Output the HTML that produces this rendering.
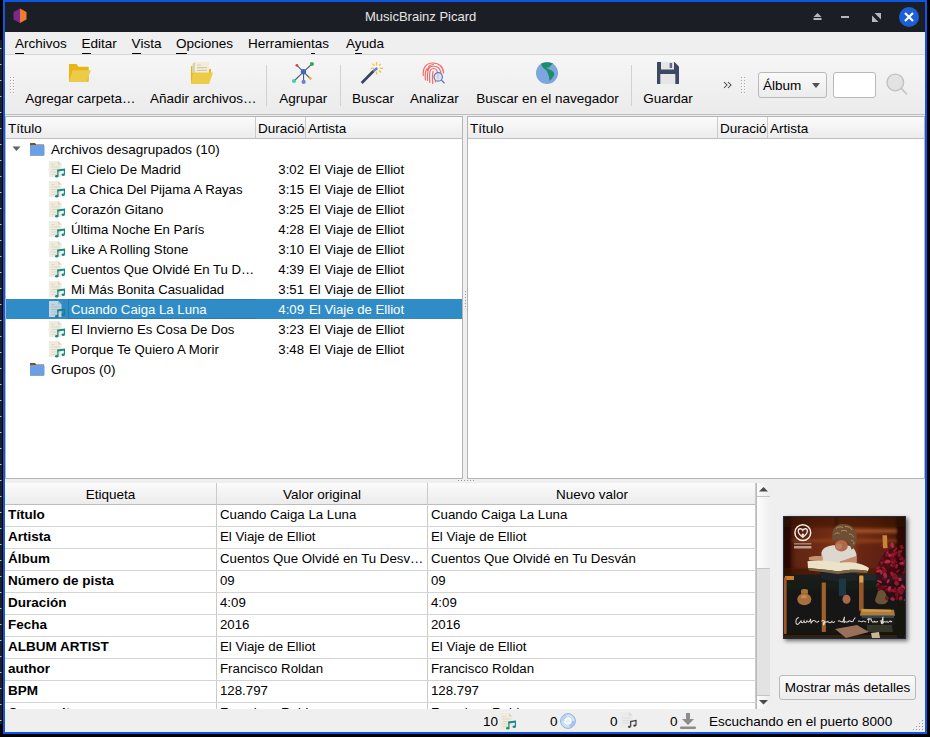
<!DOCTYPE html><html><head><meta charset="utf-8"><style>
*{margin:0;padding:0;box-sizing:border-box}
html,body{width:930px;height:737px;overflow:hidden;background:#000}
body{position:relative;font-family:"Liberation Sans",sans-serif;font-size:13.5px;color:#000}
.a{position:absolute}
.t{position:absolute;white-space:nowrap}
svg{position:absolute;overflow:visible}
</style></head><body>
<div class="a" style="left:0;top:40px;width:2px;height:684px;background:#1c1f26"></div>
<div class="a" style="left:0;top:48px;width:1px;height:1px;background:#c8e04a"></div><div class="a" style="left:1px;top:48px;width:1px;height:1px;background:#2a6be0"></div>
<div class="a" style="left:0;top:64px;width:1px;height:1px;background:#c8e04a"></div><div class="a" style="left:1px;top:64px;width:1px;height:1px;background:#2a6be0"></div>
<div class="a" style="left:0;top:80px;width:1px;height:1px;background:#c8e04a"></div><div class="a" style="left:1px;top:80px;width:1px;height:1px;background:#2a6be0"></div>
<div class="a" style="left:0;top:96px;width:1px;height:1px;background:#c8e04a"></div><div class="a" style="left:1px;top:96px;width:1px;height:1px;background:#2a6be0"></div>
<div class="a" style="left:0;top:112px;width:1px;height:1px;background:#c8e04a"></div><div class="a" style="left:1px;top:112px;width:1px;height:1px;background:#2a6be0"></div>
<div class="a" style="left:0;top:128px;width:1px;height:1px;background:#c8e04a"></div><div class="a" style="left:1px;top:128px;width:1px;height:1px;background:#2a6be0"></div>
<div class="a" style="left:0;top:144px;width:1px;height:1px;background:#c8e04a"></div><div class="a" style="left:1px;top:144px;width:1px;height:1px;background:#2a6be0"></div>
<div class="a" style="left:0;top:160px;width:1px;height:1px;background:#c8e04a"></div><div class="a" style="left:1px;top:160px;width:1px;height:1px;background:#2a6be0"></div>
<div class="a" style="left:0;top:176px;width:1px;height:1px;background:#c8e04a"></div><div class="a" style="left:1px;top:176px;width:1px;height:1px;background:#2a6be0"></div>
<div class="a" style="left:0;top:192px;width:1px;height:1px;background:#c8e04a"></div><div class="a" style="left:1px;top:192px;width:1px;height:1px;background:#2a6be0"></div>
<div class="a" style="left:0;top:208px;width:1px;height:1px;background:#c8e04a"></div><div class="a" style="left:1px;top:208px;width:1px;height:1px;background:#2a6be0"></div>
<div class="a" style="left:0;top:224px;width:1px;height:1px;background:#c8e04a"></div><div class="a" style="left:1px;top:224px;width:1px;height:1px;background:#2a6be0"></div>
<div class="a" style="left:0;top:240px;width:1px;height:1px;background:#c8e04a"></div><div class="a" style="left:1px;top:240px;width:1px;height:1px;background:#2a6be0"></div>
<div class="a" style="left:0;top:256px;width:1px;height:1px;background:#c8e04a"></div><div class="a" style="left:1px;top:256px;width:1px;height:1px;background:#2a6be0"></div>
<div class="a" style="left:0;top:272px;width:1px;height:1px;background:#c8e04a"></div><div class="a" style="left:1px;top:272px;width:1px;height:1px;background:#2a6be0"></div>
<div class="a" style="left:0;top:288px;width:1px;height:1px;background:#c8e04a"></div><div class="a" style="left:1px;top:288px;width:1px;height:1px;background:#2a6be0"></div>
<div class="a" style="left:0;top:304px;width:1px;height:1px;background:#c8e04a"></div><div class="a" style="left:1px;top:304px;width:1px;height:1px;background:#2a6be0"></div>
<div class="a" style="left:0;top:320px;width:1px;height:1px;background:#c8e04a"></div><div class="a" style="left:1px;top:320px;width:1px;height:1px;background:#2a6be0"></div>
<div class="a" style="left:0;top:336px;width:1px;height:1px;background:#c8e04a"></div><div class="a" style="left:1px;top:336px;width:1px;height:1px;background:#2a6be0"></div>
<div class="a" style="left:0;top:352px;width:1px;height:1px;background:#c8e04a"></div><div class="a" style="left:1px;top:352px;width:1px;height:1px;background:#2a6be0"></div>
<div class="a" style="left:0;top:368px;width:1px;height:1px;background:#c8e04a"></div><div class="a" style="left:1px;top:368px;width:1px;height:1px;background:#2a6be0"></div>
<div class="a" style="left:0;top:384px;width:1px;height:1px;background:#c8e04a"></div><div class="a" style="left:1px;top:384px;width:1px;height:1px;background:#2a6be0"></div>
<div class="a" style="left:0;top:400px;width:1px;height:1px;background:#c8e04a"></div><div class="a" style="left:1px;top:400px;width:1px;height:1px;background:#2a6be0"></div>
<div class="a" style="left:0;top:416px;width:1px;height:1px;background:#c8e04a"></div><div class="a" style="left:1px;top:416px;width:1px;height:1px;background:#2a6be0"></div>
<div class="a" style="left:0;top:432px;width:1px;height:1px;background:#c8e04a"></div><div class="a" style="left:1px;top:432px;width:1px;height:1px;background:#2a6be0"></div>
<div class="a" style="left:0;top:448px;width:1px;height:1px;background:#c8e04a"></div><div class="a" style="left:1px;top:448px;width:1px;height:1px;background:#2a6be0"></div>
<div class="a" style="left:0;top:464px;width:1px;height:1px;background:#c8e04a"></div><div class="a" style="left:1px;top:464px;width:1px;height:1px;background:#2a6be0"></div>
<div class="a" style="left:0;top:480px;width:1px;height:1px;background:#c8e04a"></div><div class="a" style="left:1px;top:480px;width:1px;height:1px;background:#2a6be0"></div>
<div class="a" style="left:0;top:496px;width:1px;height:1px;background:#c8e04a"></div><div class="a" style="left:1px;top:496px;width:1px;height:1px;background:#2a6be0"></div>
<div class="a" style="left:0;top:512px;width:1px;height:1px;background:#c8e04a"></div><div class="a" style="left:1px;top:512px;width:1px;height:1px;background:#2a6be0"></div>
<div class="a" style="left:0;top:528px;width:1px;height:1px;background:#c8e04a"></div><div class="a" style="left:1px;top:528px;width:1px;height:1px;background:#2a6be0"></div>
<div class="a" style="left:0;top:544px;width:1px;height:1px;background:#c8e04a"></div><div class="a" style="left:1px;top:544px;width:1px;height:1px;background:#2a6be0"></div>
<div class="a" style="left:0;top:560px;width:1px;height:1px;background:#c8e04a"></div><div class="a" style="left:1px;top:560px;width:1px;height:1px;background:#2a6be0"></div>
<div class="a" style="left:0;top:576px;width:1px;height:1px;background:#c8e04a"></div><div class="a" style="left:1px;top:576px;width:1px;height:1px;background:#2a6be0"></div>
<div class="a" style="left:0;top:592px;width:1px;height:1px;background:#c8e04a"></div><div class="a" style="left:1px;top:592px;width:1px;height:1px;background:#2a6be0"></div>
<div class="a" style="left:0;top:608px;width:1px;height:1px;background:#c8e04a"></div><div class="a" style="left:1px;top:608px;width:1px;height:1px;background:#2a6be0"></div>
<div class="a" style="left:0;top:624px;width:1px;height:1px;background:#c8e04a"></div><div class="a" style="left:1px;top:624px;width:1px;height:1px;background:#2a6be0"></div>
<div class="a" style="left:0;top:640px;width:1px;height:1px;background:#c8e04a"></div><div class="a" style="left:1px;top:640px;width:1px;height:1px;background:#2a6be0"></div>
<div class="a" style="left:0;top:656px;width:1px;height:1px;background:#c8e04a"></div><div class="a" style="left:1px;top:656px;width:1px;height:1px;background:#2a6be0"></div>
<div class="a" style="left:0;top:672px;width:1px;height:1px;background:#c8e04a"></div><div class="a" style="left:1px;top:672px;width:1px;height:1px;background:#2a6be0"></div>
<div class="a" style="left:0;top:688px;width:1px;height:1px;background:#c8e04a"></div><div class="a" style="left:1px;top:688px;width:1px;height:1px;background:#2a6be0"></div>
<div class="a" style="left:0;top:704px;width:1px;height:1px;background:#c8e04a"></div><div class="a" style="left:1px;top:704px;width:1px;height:1px;background:#2a6be0"></div>
<div class="a" style="left:0;top:720px;width:1px;height:1px;background:#c8e04a"></div><div class="a" style="left:1px;top:720px;width:1px;height:1px;background:#2a6be0"></div>
<div class="a" style="left:3px;top:0;width:924px;height:734px;border:2px solid #0e57e4;background:#efefef"></div>
<div class="a" style="left:5px;top:2px;width:920px;height:30px;background:#1c1e25"></div>
<svg style="left:12px;top:8px" width="16" height="16" viewBox="0 0 16 16"><polygon points="8,0.5 14.5,4 14.5,11.5 8,15 8,0.5" fill="#f07b2e"/><polygon points="8,0.5 1.5,4 1.5,11.5 8,15" fill="#7a2a8c"/></svg>
<div class="t" style="left:365px;top:9px;line-height:16px;font-size:13px;color:#e6e6e6">MusicBrainz Picard</div>
<svg style="left:813px;top:12px" width="10" height="10"><polygon points="0.5,5 4.5,1 8.5,5" fill="#b4b8c4"/><rect x="0.5" y="6" width="8" height="2" fill="#b4b8c4"/></svg>
<div class="a" style="left:841px;top:16px;width:8px;height:2px;background:#b4b8c4"></div>
<svg style="left:872px;top:13px" width="10" height="9"><polygon points="2.5,0 9,0 9,6.5" fill="#b4b8c4"/><polygon points="0,2.5 0,9 6.5,9" fill="#b4b8c4"/></svg>
<svg style="left:898px;top:6px" width="22" height="22"><circle cx="11" cy="11" r="10" fill="#1d5fd8"/><path d="M7,7 L15,15 M15,7 L7,15" stroke="#fff" stroke-width="2.2"/></svg>
<div class="a" style="left:5px;top:32px;width:920px;height:22px;background:#efefef"></div>
<div class="a" style="left:5px;top:54px;width:920px;height:1px;background:#d6d6d6"></div>
<div class="t" style="left:15px;top:33px;line-height:22px"><span style="position:relative">A<i style="position:absolute;left:0;right:0;top:17px;height:1px;background:#000"></i></span>rchivos</div>
<div class="t" style="left:81.5px;top:33px;line-height:22px"><span style="position:relative">E<i style="position:absolute;left:0;right:0;top:17px;height:1px;background:#000"></i></span>ditar</div>
<div class="t" style="left:131.5px;top:33px;line-height:22px"><span style="position:relative">V<i style="position:absolute;left:0;right:0;top:17px;height:1px;background:#000"></i></span>ista</div>
<div class="t" style="left:176px;top:33px;line-height:22px"><span style="position:relative">O<i style="position:absolute;left:0;right:0;top:17px;height:1px;background:#000"></i></span>pciones</div>
<div class="t" style="left:248px;top:33px;line-height:22px">Herramien<span style="position:relative">t<i style="position:absolute;left:0;right:0;top:17px;height:1px;background:#000"></i></span>as</div>
<div class="t" style="left:346px;top:33px;line-height:22px">A<span style="position:relative">y<i style="position:absolute;left:0;right:0;top:17px;height:1px;background:#000"></i></span>uda</div>
<div class="a" style="left:5px;top:55px;width:920px;height:59px;background:linear-gradient(#f6f6f6,#ebebeb)"></div>
<div class="a" style="left:5px;top:114px;width:920px;height:1px;background:#bdbdbd"></div>
<div class="a" style="left:10px;top:77px;width:1px;height:1px;background:#a9a9a9;box-shadow:1px 1px 0 #fff"></div>
<div class="a" style="left:13px;top:77px;width:1px;height:1px;background:#a9a9a9;box-shadow:1px 1px 0 #fff"></div>
<div class="a" style="left:10px;top:80px;width:1px;height:1px;background:#a9a9a9;box-shadow:1px 1px 0 #fff"></div>
<div class="a" style="left:13px;top:80px;width:1px;height:1px;background:#a9a9a9;box-shadow:1px 1px 0 #fff"></div>
<div class="a" style="left:10px;top:83px;width:1px;height:1px;background:#a9a9a9;box-shadow:1px 1px 0 #fff"></div>
<div class="a" style="left:13px;top:83px;width:1px;height:1px;background:#a9a9a9;box-shadow:1px 1px 0 #fff"></div>
<div class="a" style="left:10px;top:86px;width:1px;height:1px;background:#a9a9a9;box-shadow:1px 1px 0 #fff"></div>
<div class="a" style="left:13px;top:86px;width:1px;height:1px;background:#a9a9a9;box-shadow:1px 1px 0 #fff"></div>
<div class="a" style="left:10px;top:89px;width:1px;height:1px;background:#a9a9a9;box-shadow:1px 1px 0 #fff"></div>
<div class="a" style="left:13px;top:89px;width:1px;height:1px;background:#a9a9a9;box-shadow:1px 1px 0 #fff"></div>
<div class="a" style="left:10px;top:92px;width:1px;height:1px;background:#a9a9a9;box-shadow:1px 1px 0 #fff"></div>
<div class="a" style="left:13px;top:92px;width:1px;height:1px;background:#a9a9a9;box-shadow:1px 1px 0 #fff"></div>
<div class="a" style="left:741px;top:77px;width:1px;height:1px;background:#a9a9a9;box-shadow:1px 1px 0 #fff"></div>
<div class="a" style="left:744px;top:77px;width:1px;height:1px;background:#a9a9a9;box-shadow:1px 1px 0 #fff"></div>
<div class="a" style="left:741px;top:80px;width:1px;height:1px;background:#a9a9a9;box-shadow:1px 1px 0 #fff"></div>
<div class="a" style="left:744px;top:80px;width:1px;height:1px;background:#a9a9a9;box-shadow:1px 1px 0 #fff"></div>
<div class="a" style="left:741px;top:83px;width:1px;height:1px;background:#a9a9a9;box-shadow:1px 1px 0 #fff"></div>
<div class="a" style="left:744px;top:83px;width:1px;height:1px;background:#a9a9a9;box-shadow:1px 1px 0 #fff"></div>
<div class="a" style="left:741px;top:86px;width:1px;height:1px;background:#a9a9a9;box-shadow:1px 1px 0 #fff"></div>
<div class="a" style="left:744px;top:86px;width:1px;height:1px;background:#a9a9a9;box-shadow:1px 1px 0 #fff"></div>
<div class="a" style="left:741px;top:89px;width:1px;height:1px;background:#a9a9a9;box-shadow:1px 1px 0 #fff"></div>
<div class="a" style="left:744px;top:89px;width:1px;height:1px;background:#a9a9a9;box-shadow:1px 1px 0 #fff"></div>
<div class="a" style="left:741px;top:92px;width:1px;height:1px;background:#a9a9a9;box-shadow:1px 1px 0 #fff"></div>
<div class="a" style="left:744px;top:92px;width:1px;height:1px;background:#a9a9a9;box-shadow:1px 1px 0 #fff"></div>
<div class="t" style="left:25.2px;top:91px;line-height:16px;width:108.8px;text-align:center">Agregar carpeta…</div>
<div class="t" style="left:150px;top:91px;line-height:16px;width:104.3px;text-align:center">Añadir archivos…</div>
<div class="t" style="left:278.3px;top:91px;line-height:16px;width:49.7px;text-align:center">Agrupar</div>
<div class="t" style="left:352px;top:91px;line-height:16px;width:40.7px;text-align:center">Buscar</div>
<div class="t" style="left:409.8px;top:91px;line-height:16px;width:49px;text-align:center">Analizar</div>
<div class="t" style="left:476.1px;top:91px;line-height:16px;width:142.7px;text-align:center">Buscar en el navegador</div>
<div class="t" style="left:643.3px;top:91px;line-height:16px;width:49.4px;text-align:center">Guardar</div>
<div class="a" style="left:266px;top:65px;width:1px;height:41px;background:#d2d2d2"></div>
<div class="a" style="left:340px;top:65px;width:1px;height:41px;background:#d2d2d2"></div>
<div class="a" style="left:631px;top:65px;width:1px;height:41px;background:#d2d2d2"></div>
<svg style="left:69px;top:64px" width="22" height="18" viewBox="0 0 22 18"><path d="M0,0 H7.7 L9.4,2.7 H19.7 V17.8 H0 Z" fill="#e8b418"/><polygon points="3.6,6.2 21.8,6.2 17.7,17.8 0,17.8" fill="#eccb47"/></svg>
<svg style="left:191px;top:62px" width="22" height="22" viewBox="0 0 22 22"><rect x="0" y="4" width="2.5" height="18" fill="#e8b418"/><rect x="18" y="7" width="2" height="4" fill="#e8b418"/><polygon points="1.5,1.5 4,0 18,0 18,11 1.5,11" fill="#f3edd8"/><polygon points="1.5,1.5 4,0 4,11 1.5,11" fill="#d8d2bc"/><rect x="6" y="2.4" width="4" height="1.2" fill="#dcd6c0"/><rect x="6" y="5" width="10" height="1.2" fill="#cfc8b0"/><rect x="6" y="7.8" width="10" height="1.2" fill="#cfc8b0"/><polygon points="2,10.5 22,10.5 18,22 0,22" fill="#eccb47"/></svg>
<svg style="left:288px;top:58px" width="30" height="30" viewBox="0 0 30 30"><g stroke="#4f5a73" stroke-width="1.1"><line x1="15.5" y1="13.8" x2="8.9" y2="7.3"/><line x1="15.5" y1="13.8" x2="23.9" y2="6"/><line x1="15.5" y1="13.8" x2="6" y2="23"/><line x1="15.5" y1="13.8" x2="15.6" y2="23.9"/><line x1="15.5" y1="13.8" x2="22.3" y2="20.5"/></g><circle cx="15.5" cy="13.8" r="2.7" fill="#4467b0"/><circle cx="8.9" cy="7.3" r="1.4" fill="#da4a3a"/><circle cx="23.9" cy="6" r="2.1" fill="#36a852"/><circle cx="6" cy="23" r="2.1" fill="#44d39a"/><circle cx="15.6" cy="23.9" r="2.1" fill="#6f82cc"/><circle cx="22.3" cy="20.5" r="1.4" fill="#f2b81a"/></svg>
<svg style="left:356px;top:58px" width="30" height="30" viewBox="0 0 30 30"><line x1="5.7" y1="25" x2="17.5" y2="13" stroke="#39425f" stroke-width="2.6"/><line x1="17.3" y1="13.2" x2="21.3" y2="10" stroke="#6b80cc" stroke-width="2.6"/><g stroke="#f1c232" stroke-width="1.3"><line x1="20.5" y1="4" x2="20.5" y2="7.5"/><line x1="20.5" y1="13.5" x2="20.5" y2="16.5"/><line x1="14.8" y1="10.3" x2="18" y2="10.3"/><line x1="23.8" y1="10.3" x2="27" y2="10.3"/><line x1="16.4" y1="5.6" x2="18.5" y2="7.6"/><line x1="24.8" y1="6" x2="23" y2="7.5"/><line x1="23" y1="12.5" x2="25" y2="14.5"/></g></svg>
<svg style="left:418px;top:58px" width="30" height="30" viewBox="0 0 30 30"><g fill="none" stroke="#f26b6b" stroke-width="1.2" stroke-linecap="round"><path d="M5.3,17.5 C4.5,10 8,5 15,5 C21,5 25.5,9 25.5,15"/><path d="M9.3,12.5 C10,8.5 12,6.5 15.5,6.5"/><path d="M7.5,22 C7,18 7,14 8.5,11"/><path d="M9.5,22.5 C9.5,18 9,12 11.5,9.5 C13.5,7.8 17.5,7.8 20,9.5 C22.5,11.5 23,14 23,17"/><path d="M11.8,24.5 C11.5,19 11,15 12.5,12 C14,10 17,10 18.5,12 C19.8,14 20,16 20.5,18"/><path d="M14.7,25.5 C14.5,21 14,17 15,13.5"/><path d="M17.4,20 L17.5,24"/></g><circle cx="20.2" cy="18.9" r="4.2" fill="#dbe6f3" stroke="#5e78c0" stroke-width="1.2"/><line x1="23.2" y1="21.9" x2="26.5" y2="25.3" stroke="#5e78c0" stroke-width="1.3"/><line x1="20" y1="16" x2="20" y2="21" stroke="#f0a0a0" stroke-width="0.8"/></svg>
<svg style="left:536px;top:62px" width="22" height="22" viewBox="0 0 22 22"><circle cx="11" cy="11" r="11" fill="#7da7dc"/><path d="M5,1.7 C8,0 14,0 17.3,1.6 C15,3 14,4.5 12.8,6 C12,5.5 11.5,5 10.5,5.5 C11.5,6.5 13,7.5 14.5,8 C17,9 18.2,10 18.2,12 C18,14.5 16,16.5 13.5,19 C13,17 13.2,15 12.5,13 C11.5,11 11,9 10,8 C8,7 6,5 5,1.7 Z" fill="#1d8c6b"/></svg>
<svg style="left:657px;top:62px" width="22" height="22" viewBox="0 0 22 22"><path d="M0,0 H17.5 L22,4.5 V22 H0 Z" fill="#3d4963"/><rect x="4" y="0" width="13" height="7.5" fill="#e6e6e6"/><rect x="12.7" y="1.2" width="2.4" height="4.6" fill="#3d4963"/><rect x="13.4" y="2" width="1" height="3" fill="#8a93a8"/><rect x="3.3" y="12" width="15" height="10" fill="#e6e6e6"/></svg>
<svg style="left:723px;top:81px" width="10" height="8" viewBox="0 0 10 8"><path d="M1,1 L4,4 L1,7 M5,1 L8,4 L5,7" fill="none" stroke="#444" stroke-width="1.05"/></svg>
<div class="a" style="left:758px;top:72px;width:69px;height:26px;border:1px solid #b9b9b9;border-radius:3px;background:linear-gradient(#fafafa,#ececec)"></div>
<div class="t" style="left:763px;top:78px;line-height:16px">Álbum</div>
<svg style="left:812px;top:83px" width="8" height="5"><polygon points="0,0 8,0 4,5" fill="#505050"/></svg>
<div class="a" style="left:833px;top:72px;width:43px;height:26px;border:1px solid #b9b9b9;border-radius:3px;background:#fff"></div>
<svg style="left:884px;top:71px" width="26" height="26" viewBox="0 0 26 26"><circle cx="11.3" cy="11.4" r="8.3" fill="#e3e3e3" stroke="#c2c2c2" stroke-width="1.4"/><line x1="17.2" y1="17.3" x2="23" y2="23.5" stroke="#c2c2c2" stroke-width="1.6"/></svg>
<div class="a" style="left:5px;top:115px;width:920px;height:594px;background:#efefef"></div>
<div class="a" style="left:5px;top:116px;width:458px;height:363px;border:1px solid #b4b4b4;background:#fff"></div>
<div class="a" style="left:6px;top:117px;width:456px;height:21px;background:linear-gradient(#fbfbfb,#ececec)"></div>
<div class="a" style="left:6px;top:138px;width:456px;height:1px;background:#bdbdbd"></div>
<div class="a" style="left:255px;top:117px;width:1px;height:21px;background:#cbcbcb"></div>
<div class="a" style="left:305px;top:117px;width:1px;height:21px;background:#cbcbcb"></div>
<div class="t" style="left:8px;top:119px;line-height:20px">Título</div>
<div class="t" style="left:258px;top:119px;line-height:20px;width:47px;overflow:hidden">Duración</div>
<div class="t" style="left:308px;top:119px;line-height:20px">Artista</div>
<div class="a" style="left:467px;top:116px;width:458px;height:363px;border:1px solid #b4b4b4;background:#fff"></div>
<div class="a" style="left:468px;top:117px;width:456px;height:21px;background:linear-gradient(#fbfbfb,#ececec)"></div>
<div class="a" style="left:468px;top:138px;width:456px;height:1px;background:#bdbdbd"></div>
<div class="a" style="left:717px;top:117px;width:1px;height:21px;background:#cbcbcb"></div>
<div class="a" style="left:767px;top:117px;width:1px;height:21px;background:#cbcbcb"></div>
<div class="t" style="left:470px;top:119px;line-height:20px">Título</div>
<div class="t" style="left:720px;top:119px;line-height:20px;width:47px;overflow:hidden">Duración</div>
<div class="t" style="left:770px;top:119px;line-height:20px">Artista</div>
<div class="a" style="left:465px;top:291px;width:1px;height:1px;background:#9a9a9a"></div>
<div class="a" style="left:465px;top:294px;width:1px;height:1px;background:#9a9a9a"></div>
<div class="a" style="left:465px;top:297px;width:1px;height:1px;background:#9a9a9a"></div>
<div class="a" style="left:465px;top:300px;width:1px;height:1px;background:#9a9a9a"></div>
<div class="a" style="left:465px;top:303px;width:1px;height:1px;background:#9a9a9a"></div>
<div class="a" style="left:465px;top:306px;width:1px;height:1px;background:#9a9a9a"></div>
<div class="a" style="left:458px;top:480px;width:1px;height:1px;background:#9a9a9a"></div>
<div class="a" style="left:461px;top:480px;width:1px;height:1px;background:#9a9a9a"></div>
<div class="a" style="left:464px;top:480px;width:1px;height:1px;background:#9a9a9a"></div>
<div class="a" style="left:467px;top:480px;width:1px;height:1px;background:#9a9a9a"></div>
<div class="a" style="left:470px;top:480px;width:1px;height:1px;background:#9a9a9a"></div>
<div class="a" style="left:473px;top:480px;width:1px;height:1px;background:#9a9a9a"></div>
<svg style="left:12px;top:146px" width="9" height="6"><polygon points="0.5,0.5 8.5,0.5 4.5,5" fill="#606060"/></svg>
<svg style="left:30px;top:143px" width="15" height="13" viewBox="0 0 15 13"><path d="M0,0.5 Q0,0 0.5,0 H5 L6.2,1.5 H14 V12.5 H0 Z" fill="#8a4b14"/><rect x="0" y="2" width="14.5" height="10.5" rx="0.8" fill="#6aa0e6"/></svg>
<div class="t" style="left:51px;top:140px;line-height:20px">Archivos desagrupados (10)</div>
<svg style="left:49px;top:161px" width="17" height="17" viewBox="0 0 17 17"><path d="M0,0 H9 L12.5,3.5 V16 H0 Z" fill="#efebdd"/><path d="M9,0 L12.5,3.5 H9 Z" fill="#d9d3c0"/><g fill="#dcd6c4"><rect x="2.5" y="3" width="3" height="0.9"/><rect x="2.5" y="5.5" width="8" height="0.9"/><rect x="2.5" y="8" width="8" height="0.9"/><rect x="2.5" y="10.5" width="8" height="0.9"/><rect x="2.5" y="13" width="6" height="0.9"/></g><polygon points="8.3,8.4 16,7.6 16,9.6 8.3,10.4" fill="#168a8a"/><rect x="8.3" y="9" width="1.2" height="6" fill="#168a8a"/><rect x="14.8" y="8" width="1.2" height="5.6" fill="#168a8a"/><ellipse cx="7.7" cy="15.2" rx="1.7" ry="1.3" fill="#168a8a"/><ellipse cx="14.2" cy="13.8" rx="1.7" ry="1.3" fill="#168a8a"/></svg>
<div class="t" style="left:71px;top:160px;line-height:20px;font-size:13.2px;color:#000">El Cielo De Madrid</div>
<div class="t" style="left:255px;top:160px;line-height:20px;width:49px;text-align:right;font-size:13.2px;color:#000">3:02</div>
<div class="t" style="left:309px;top:160px;line-height:20px;font-size:13.2px;color:#000">El Viaje de Elliot</div>
<svg style="left:49px;top:181px" width="17" height="17" viewBox="0 0 17 17"><path d="M0,0 H9 L12.5,3.5 V16 H0 Z" fill="#efebdd"/><path d="M9,0 L12.5,3.5 H9 Z" fill="#d9d3c0"/><g fill="#dcd6c4"><rect x="2.5" y="3" width="3" height="0.9"/><rect x="2.5" y="5.5" width="8" height="0.9"/><rect x="2.5" y="8" width="8" height="0.9"/><rect x="2.5" y="10.5" width="8" height="0.9"/><rect x="2.5" y="13" width="6" height="0.9"/></g><polygon points="8.3,8.4 16,7.6 16,9.6 8.3,10.4" fill="#168a8a"/><rect x="8.3" y="9" width="1.2" height="6" fill="#168a8a"/><rect x="14.8" y="8" width="1.2" height="5.6" fill="#168a8a"/><ellipse cx="7.7" cy="15.2" rx="1.7" ry="1.3" fill="#168a8a"/><ellipse cx="14.2" cy="13.8" rx="1.7" ry="1.3" fill="#168a8a"/></svg>
<div class="t" style="left:71px;top:180px;line-height:20px;font-size:13.2px;color:#000">La Chica Del Pijama A Rayas</div>
<div class="t" style="left:255px;top:180px;line-height:20px;width:49px;text-align:right;font-size:13.2px;color:#000">3:15</div>
<div class="t" style="left:309px;top:180px;line-height:20px;font-size:13.2px;color:#000">El Viaje de Elliot</div>
<svg style="left:49px;top:201px" width="17" height="17" viewBox="0 0 17 17"><path d="M0,0 H9 L12.5,3.5 V16 H0 Z" fill="#efebdd"/><path d="M9,0 L12.5,3.5 H9 Z" fill="#d9d3c0"/><g fill="#dcd6c4"><rect x="2.5" y="3" width="3" height="0.9"/><rect x="2.5" y="5.5" width="8" height="0.9"/><rect x="2.5" y="8" width="8" height="0.9"/><rect x="2.5" y="10.5" width="8" height="0.9"/><rect x="2.5" y="13" width="6" height="0.9"/></g><polygon points="8.3,8.4 16,7.6 16,9.6 8.3,10.4" fill="#168a8a"/><rect x="8.3" y="9" width="1.2" height="6" fill="#168a8a"/><rect x="14.8" y="8" width="1.2" height="5.6" fill="#168a8a"/><ellipse cx="7.7" cy="15.2" rx="1.7" ry="1.3" fill="#168a8a"/><ellipse cx="14.2" cy="13.8" rx="1.7" ry="1.3" fill="#168a8a"/></svg>
<div class="t" style="left:71px;top:200px;line-height:20px;font-size:13.2px;color:#000">Corazón Gitano</div>
<div class="t" style="left:255px;top:200px;line-height:20px;width:49px;text-align:right;font-size:13.2px;color:#000">3:25</div>
<div class="t" style="left:309px;top:200px;line-height:20px;font-size:13.2px;color:#000">El Viaje de Elliot</div>
<svg style="left:49px;top:221px" width="17" height="17" viewBox="0 0 17 17"><path d="M0,0 H9 L12.5,3.5 V16 H0 Z" fill="#efebdd"/><path d="M9,0 L12.5,3.5 H9 Z" fill="#d9d3c0"/><g fill="#dcd6c4"><rect x="2.5" y="3" width="3" height="0.9"/><rect x="2.5" y="5.5" width="8" height="0.9"/><rect x="2.5" y="8" width="8" height="0.9"/><rect x="2.5" y="10.5" width="8" height="0.9"/><rect x="2.5" y="13" width="6" height="0.9"/></g><polygon points="8.3,8.4 16,7.6 16,9.6 8.3,10.4" fill="#168a8a"/><rect x="8.3" y="9" width="1.2" height="6" fill="#168a8a"/><rect x="14.8" y="8" width="1.2" height="5.6" fill="#168a8a"/><ellipse cx="7.7" cy="15.2" rx="1.7" ry="1.3" fill="#168a8a"/><ellipse cx="14.2" cy="13.8" rx="1.7" ry="1.3" fill="#168a8a"/></svg>
<div class="t" style="left:71px;top:220px;line-height:20px;font-size:13.2px;color:#000">Última Noche En París</div>
<div class="t" style="left:255px;top:220px;line-height:20px;width:49px;text-align:right;font-size:13.2px;color:#000">4:28</div>
<div class="t" style="left:309px;top:220px;line-height:20px;font-size:13.2px;color:#000">El Viaje de Elliot</div>
<svg style="left:49px;top:241px" width="17" height="17" viewBox="0 0 17 17"><path d="M0,0 H9 L12.5,3.5 V16 H0 Z" fill="#efebdd"/><path d="M9,0 L12.5,3.5 H9 Z" fill="#d9d3c0"/><g fill="#dcd6c4"><rect x="2.5" y="3" width="3" height="0.9"/><rect x="2.5" y="5.5" width="8" height="0.9"/><rect x="2.5" y="8" width="8" height="0.9"/><rect x="2.5" y="10.5" width="8" height="0.9"/><rect x="2.5" y="13" width="6" height="0.9"/></g><polygon points="8.3,8.4 16,7.6 16,9.6 8.3,10.4" fill="#168a8a"/><rect x="8.3" y="9" width="1.2" height="6" fill="#168a8a"/><rect x="14.8" y="8" width="1.2" height="5.6" fill="#168a8a"/><ellipse cx="7.7" cy="15.2" rx="1.7" ry="1.3" fill="#168a8a"/><ellipse cx="14.2" cy="13.8" rx="1.7" ry="1.3" fill="#168a8a"/></svg>
<div class="t" style="left:71px;top:240px;line-height:20px;font-size:13.2px;color:#000">Like A Rolling Stone</div>
<div class="t" style="left:255px;top:240px;line-height:20px;width:49px;text-align:right;font-size:13.2px;color:#000">3:10</div>
<div class="t" style="left:309px;top:240px;line-height:20px;font-size:13.2px;color:#000">El Viaje de Elliot</div>
<svg style="left:49px;top:261px" width="17" height="17" viewBox="0 0 17 17"><path d="M0,0 H9 L12.5,3.5 V16 H0 Z" fill="#efebdd"/><path d="M9,0 L12.5,3.5 H9 Z" fill="#d9d3c0"/><g fill="#dcd6c4"><rect x="2.5" y="3" width="3" height="0.9"/><rect x="2.5" y="5.5" width="8" height="0.9"/><rect x="2.5" y="8" width="8" height="0.9"/><rect x="2.5" y="10.5" width="8" height="0.9"/><rect x="2.5" y="13" width="6" height="0.9"/></g><polygon points="8.3,8.4 16,7.6 16,9.6 8.3,10.4" fill="#168a8a"/><rect x="8.3" y="9" width="1.2" height="6" fill="#168a8a"/><rect x="14.8" y="8" width="1.2" height="5.6" fill="#168a8a"/><ellipse cx="7.7" cy="15.2" rx="1.7" ry="1.3" fill="#168a8a"/><ellipse cx="14.2" cy="13.8" rx="1.7" ry="1.3" fill="#168a8a"/></svg>
<div class="t" style="left:71px;top:260px;line-height:20px;font-size:13.2px;color:#000">Cuentos Que Olvidé En Tu D…</div>
<div class="t" style="left:255px;top:260px;line-height:20px;width:49px;text-align:right;font-size:13.2px;color:#000">4:39</div>
<div class="t" style="left:309px;top:260px;line-height:20px;font-size:13.2px;color:#000">El Viaje de Elliot</div>
<svg style="left:49px;top:281px" width="17" height="17" viewBox="0 0 17 17"><path d="M0,0 H9 L12.5,3.5 V16 H0 Z" fill="#efebdd"/><path d="M9,0 L12.5,3.5 H9 Z" fill="#d9d3c0"/><g fill="#dcd6c4"><rect x="2.5" y="3" width="3" height="0.9"/><rect x="2.5" y="5.5" width="8" height="0.9"/><rect x="2.5" y="8" width="8" height="0.9"/><rect x="2.5" y="10.5" width="8" height="0.9"/><rect x="2.5" y="13" width="6" height="0.9"/></g><polygon points="8.3,8.4 16,7.6 16,9.6 8.3,10.4" fill="#168a8a"/><rect x="8.3" y="9" width="1.2" height="6" fill="#168a8a"/><rect x="14.8" y="8" width="1.2" height="5.6" fill="#168a8a"/><ellipse cx="7.7" cy="15.2" rx="1.7" ry="1.3" fill="#168a8a"/><ellipse cx="14.2" cy="13.8" rx="1.7" ry="1.3" fill="#168a8a"/></svg>
<div class="t" style="left:71px;top:280px;line-height:20px;font-size:13.2px;color:#000">Mi Más Bonita Casualidad</div>
<div class="t" style="left:255px;top:280px;line-height:20px;width:49px;text-align:right;font-size:13.2px;color:#000">3:51</div>
<div class="t" style="left:309px;top:280px;line-height:20px;font-size:13.2px;color:#000">El Viaje de Elliot</div>
<div class="a" style="left:6px;top:299px;width:456px;height:20px;background:#308cc6"></div>
<div class="a" style="left:68px;top:299px;width:188px;height:20px;border:1px solid #2a7ab0;border-right:none"></div>
<svg style="left:49px;top:301px" width="17" height="17" viewBox="0 0 17 17"><path d="M0,0 H9 L12.5,3.5 V16 H0 Z" fill="#c2d4de"/><path d="M9,0 L12.5,3.5 H9 Z" fill="#a9bcc8"/><g fill="#a8bac6"><rect x="2.5" y="3" width="3" height="0.9"/><rect x="2.5" y="5.5" width="8" height="0.9"/><rect x="2.5" y="8" width="8" height="0.9"/><rect x="2.5" y="10.5" width="8" height="0.9"/><rect x="2.5" y="13" width="6" height="0.9"/></g><polygon points="8.3,8.4 16,7.6 16,9.6 8.3,10.4" fill="#1a7d8c"/><rect x="8.3" y="9" width="1.2" height="6" fill="#1a7d8c"/><rect x="14.8" y="8" width="1.2" height="5.6" fill="#1a7d8c"/><ellipse cx="7.7" cy="15.2" rx="1.7" ry="1.3" fill="#1a7d8c"/><ellipse cx="14.2" cy="13.8" rx="1.7" ry="1.3" fill="#1a7d8c"/></svg>
<div class="t" style="left:71px;top:300px;line-height:20px;font-size:13.2px;color:#fff">Cuando Caiga La Luna</div>
<div class="t" style="left:255px;top:300px;line-height:20px;width:49px;text-align:right;font-size:13.2px;color:#fff">4:09</div>
<div class="t" style="left:309px;top:300px;line-height:20px;font-size:13.2px;color:#fff">El Viaje de Elliot</div>
<svg style="left:49px;top:321px" width="17" height="17" viewBox="0 0 17 17"><path d="M0,0 H9 L12.5,3.5 V16 H0 Z" fill="#efebdd"/><path d="M9,0 L12.5,3.5 H9 Z" fill="#d9d3c0"/><g fill="#dcd6c4"><rect x="2.5" y="3" width="3" height="0.9"/><rect x="2.5" y="5.5" width="8" height="0.9"/><rect x="2.5" y="8" width="8" height="0.9"/><rect x="2.5" y="10.5" width="8" height="0.9"/><rect x="2.5" y="13" width="6" height="0.9"/></g><polygon points="8.3,8.4 16,7.6 16,9.6 8.3,10.4" fill="#168a8a"/><rect x="8.3" y="9" width="1.2" height="6" fill="#168a8a"/><rect x="14.8" y="8" width="1.2" height="5.6" fill="#168a8a"/><ellipse cx="7.7" cy="15.2" rx="1.7" ry="1.3" fill="#168a8a"/><ellipse cx="14.2" cy="13.8" rx="1.7" ry="1.3" fill="#168a8a"/></svg>
<div class="t" style="left:71px;top:320px;line-height:20px;font-size:13.2px;color:#000">El Invierno Es Cosa De Dos</div>
<div class="t" style="left:255px;top:320px;line-height:20px;width:49px;text-align:right;font-size:13.2px;color:#000">3:23</div>
<div class="t" style="left:309px;top:320px;line-height:20px;font-size:13.2px;color:#000">El Viaje de Elliot</div>
<svg style="left:49px;top:341px" width="17" height="17" viewBox="0 0 17 17"><path d="M0,0 H9 L12.5,3.5 V16 H0 Z" fill="#efebdd"/><path d="M9,0 L12.5,3.5 H9 Z" fill="#d9d3c0"/><g fill="#dcd6c4"><rect x="2.5" y="3" width="3" height="0.9"/><rect x="2.5" y="5.5" width="8" height="0.9"/><rect x="2.5" y="8" width="8" height="0.9"/><rect x="2.5" y="10.5" width="8" height="0.9"/><rect x="2.5" y="13" width="6" height="0.9"/></g><polygon points="8.3,8.4 16,7.6 16,9.6 8.3,10.4" fill="#168a8a"/><rect x="8.3" y="9" width="1.2" height="6" fill="#168a8a"/><rect x="14.8" y="8" width="1.2" height="5.6" fill="#168a8a"/><ellipse cx="7.7" cy="15.2" rx="1.7" ry="1.3" fill="#168a8a"/><ellipse cx="14.2" cy="13.8" rx="1.7" ry="1.3" fill="#168a8a"/></svg>
<div class="t" style="left:71px;top:340px;line-height:20px;font-size:13.2px;color:#000">Porque Te Quiero A Morir</div>
<div class="t" style="left:255px;top:340px;line-height:20px;width:49px;text-align:right;font-size:13.2px;color:#000">3:48</div>
<div class="t" style="left:309px;top:340px;line-height:20px;font-size:13.2px;color:#000">El Viaje de Elliot</div>
<svg style="left:30px;top:363px" width="15" height="13" viewBox="0 0 15 13"><path d="M0,0.5 Q0,0 0.5,0 H5 L6.2,1.5 H14 V12.5 H0 Z" fill="#8a4b14"/><rect x="0" y="2" width="14.5" height="10.5" rx="0.8" fill="#6aa0e6"/></svg>
<div class="t" style="left:51px;top:360px;line-height:20px">Grupos (0)</div>
<div class="a" style="left:5px;top:483px;width:752px;height:226px;background:#fff;overflow:hidden"></div>
<div class="a" style="left:5px;top:483px;width:751px;height:21px;background:linear-gradient(#fbfbfb,#ececec)"></div>
<div class="a" style="left:5px;top:504px;width:751px;height:1px;background:#bdbdbd"></div>
<div class="a" style="left:216px;top:483px;width:1px;height:226px;background:#cbcbcb"></div>
<div class="a" style="left:427px;top:483px;width:1px;height:226px;background:#cbcbcb"></div>
<div class="a" style="left:755px;top:483px;width:1px;height:226px;background:#c9c9c9"></div><div class="a" style="left:756px;top:483px;width:1px;height:226px;background:#bababa"></div>
<div class="t" style="left:5px;top:485px;width:211px;line-height:20px;text-align:center">Etiqueta</div>
<div class="t" style="left:217px;top:485px;width:210px;line-height:20px;text-align:center">Valor original</div>
<div class="t" style="left:428px;top:485px;width:328px;line-height:20px;text-align:center">Nuevo valor</div>
<div class="a" style="left:5px;top:526px;width:751px;height:1px;background:#d4d4d4"></div>
<div class="t" style="left:8px;top:505px;line-height:20px;font-weight:bold">Título</div>
<div class="t" style="left:220px;top:505px;line-height:20px;font-size:13.25px">Cuando Caiga La Luna</div>
<div class="t" style="left:431px;top:505px;line-height:20px;font-size:13.25px">Cuando Caiga La Luna</div>
<div class="a" style="left:5px;top:548px;width:751px;height:1px;background:#d4d4d4"></div>
<div class="t" style="left:8px;top:527px;line-height:20px;font-weight:bold">Artista</div>
<div class="t" style="left:220px;top:527px;line-height:20px;font-size:13.25px">El Viaje de Elliot</div>
<div class="t" style="left:431px;top:527px;line-height:20px;font-size:13.25px">El Viaje de Elliot</div>
<div class="a" style="left:5px;top:570px;width:751px;height:1px;background:#d4d4d4"></div>
<div class="t" style="left:8px;top:549px;line-height:20px;font-weight:bold">Álbum</div>
<div class="t" style="left:220px;top:549px;line-height:20px;font-size:13.25px">Cuentos Que Olvidé en Tu Desv…</div>
<div class="t" style="left:431px;top:549px;line-height:20px;font-size:13.25px">Cuentos Que Olvidé en Tu Desván</div>
<div class="a" style="left:5px;top:592px;width:751px;height:1px;background:#d4d4d4"></div>
<div class="t" style="left:8px;top:571px;line-height:20px;font-weight:bold">Número de pista</div>
<div class="t" style="left:220px;top:571px;line-height:20px;font-size:13.25px">09</div>
<div class="t" style="left:431px;top:571px;line-height:20px;font-size:13.25px">09</div>
<div class="a" style="left:5px;top:614px;width:751px;height:1px;background:#d4d4d4"></div>
<div class="t" style="left:8px;top:593px;line-height:20px;font-weight:bold">Duración</div>
<div class="t" style="left:220px;top:593px;line-height:20px;font-size:13.25px">4:09</div>
<div class="t" style="left:431px;top:593px;line-height:20px;font-size:13.25px">4:09</div>
<div class="a" style="left:5px;top:636px;width:751px;height:1px;background:#d4d4d4"></div>
<div class="t" style="left:8px;top:615px;line-height:20px;font-weight:bold">Fecha</div>
<div class="t" style="left:220px;top:615px;line-height:20px;font-size:13.25px">2016</div>
<div class="t" style="left:431px;top:615px;line-height:20px;font-size:13.25px">2016</div>
<div class="a" style="left:5px;top:658px;width:751px;height:1px;background:#d4d4d4"></div>
<div class="t" style="left:8px;top:637px;line-height:20px;font-weight:bold">ALBUM ARTIST</div>
<div class="t" style="left:220px;top:637px;line-height:20px;font-size:13.25px">El Viaje de Elliot</div>
<div class="t" style="left:431px;top:637px;line-height:20px;font-size:13.25px">El Viaje de Elliot</div>
<div class="a" style="left:5px;top:680px;width:751px;height:1px;background:#d4d4d4"></div>
<div class="t" style="left:8px;top:659px;line-height:20px;font-weight:bold">author</div>
<div class="t" style="left:220px;top:659px;line-height:20px;font-size:13.25px">Francisco Roldan</div>
<div class="t" style="left:431px;top:659px;line-height:20px;font-size:13.25px">Francisco Roldan</div>
<div class="a" style="left:5px;top:702px;width:751px;height:1px;background:#d4d4d4"></div>
<div class="t" style="left:8px;top:681px;line-height:20px;font-weight:bold">BPM</div>
<div class="t" style="left:220px;top:681px;line-height:20px;font-size:13.25px">128.797</div>
<div class="t" style="left:431px;top:681px;line-height:20px;font-size:13.25px">128.797</div>
<div class="a" style="left:5px;top:724px;width:751px;height:1px;background:#d4d4d4"></div>
<div class="t" style="left:8px;top:703px;line-height:20px;font-weight:bold">Compositor</div>
<div class="t" style="left:220px;top:703px;line-height:20px;font-size:13.25px">Francisco Roldan</div>
<div class="t" style="left:431px;top:703px;line-height:20px;font-size:13.25px">Francisco Roldan</div>
<div class="a" style="left:757px;top:483px;width:13px;height:226px;background:#e3e3e3"></div>
<div class="a" style="left:757px;top:483px;width:13px;height:13px;background:linear-gradient(90deg,#fbfbfb,#ededed)"></div>
<div class="a" style="left:757px;top:496px;width:13px;height:1px;background:#c4c4c4"></div>
<svg style="left:759px;top:487px" width="9" height="5"><polygon points="0,4.5 4.5,0 9,4.5" fill="#4a4a4a"/></svg>
<div class="a" style="left:757px;top:497px;width:13px;height:71px;background:linear-gradient(90deg,#fdfdfd,#efefef)"></div>
<div class="a" style="left:757px;top:568px;width:13px;height:1px;background:#c4c4c4"></div>
<div class="a" style="left:757px;top:695px;width:13px;height:1px;background:#c4c4c4"></div>
<div class="a" style="left:757px;top:696px;width:13px;height:13px;background:linear-gradient(90deg,#fbfbfb,#ededed)"></div>
<svg style="left:759px;top:700px" width="9" height="5"><polygon points="0,0 9,0 4.5,4.5" fill="#4a4a4a"/></svg>
<div class="a" style="left:783px;top:516px;width:123px;height:123px;box-shadow:2px 2px 4px rgba(0,0,0,0.55)"></div>
<svg style="left:783px;top:516px" width="123" height="123" viewBox="0 0 123 122" preserveAspectRatio="none">
<defs>
<radialGradient id="glow" cx="0.5" cy="0.32" r="0.62"><stop offset="0" stop-color="#8e3a1c"/><stop offset="0.55" stop-color="#62240f"/><stop offset="1" stop-color="#2a0c05"/></radialGradient>
<linearGradient id="trk" x1="0" y1="0" x2="0" y2="1"><stop offset="0" stop-color="#1a1c1a"/><stop offset="1" stop-color="#121110"/></linearGradient>
<filter id="bl" x="-5%" y="-5%" width="110%" height="110%"><feGaussianBlur stdDeviation="0.4"/></filter>
<filter id="bl2" x="-20%" y="-20%" width="140%" height="140%"><feGaussianBlur stdDeviation="1"/></filter>
<clipPath id="cc"><rect width="123" height="122"/></clipPath>
</defs>
<g clip-path="url(#cc)">
<rect width="123" height="122" fill="url(#glow)"/>
<g filter="url(#bl2)">
<rect x="0" y="0" width="123" height="11" fill="#3a1408" opacity="0.55"/>
<rect x="52" y="0" width="3" height="12" fill="#2a0e06" opacity="0.6"/>
<rect x="70" y="13" width="44" height="4" fill="#a8582a" opacity="0.75"/>
<rect x="10" y="23" width="104" height="3" fill="#9a4a22" opacity="0.6"/>
<rect x="12" y="27" width="26" height="26" fill="#6a2812" opacity="0.5"/>
<rect x="74" y="28" width="36" height="24" rx="3" fill="#5a200c" opacity="0.6"/>
<rect x="0" y="0" width="8" height="60" fill="#1e0804" opacity="0.75"/>
<rect x="113" y="0" width="10" height="60" fill="#1e0804" opacity="0.6"/>
<rect x="0" y="52" width="123" height="7" fill="#3a1408" opacity="0.6"/>
</g>
<g filter="url(#bl)">
<!-- trunk -->
<rect x="0" y="58" width="123" height="64" fill="url(#trk)"/>
<rect x="81" y="58" width="42" height="6" fill="#1a2a2c"/>
<rect x="2" y="59.5" width="9" height="4" fill="#d07a2c"/>
<rect x="0.8" y="61" width="2.8" height="56" fill="#a0582a"/>
<rect x="38.7" y="66" width="4.2" height="49" fill="#a0602a"/>
<rect x="76" y="60" width="4.6" height="34" fill="#945828"/>
<rect x="76.3" y="59" width="4" height="7" fill="#d8a050"/>
<path d="M18,74 C18,72 25,72 25,74 L25,77 L18,77Z" fill="#a8703a"/>
<ellipse cx="21.3" cy="82.5" rx="7" ry="6" fill="#a8703a"/>
<ellipse cx="21" cy="80" rx="3" ry="1.6" fill="#d89050" opacity="0.8"/>
<path d="M95,75 C95,73 102,73 102,75 L105,83 C105,89 92,89 92,83Z" fill="#6a5234"/>
<rect x="0" y="118" width="123" height="4" fill="#2e2218"/>
<!-- child -->
<path d="M37,55 L74,54 L74,64 L63,66 L63,80 L56,80 L55,66 L38,62 Z" fill="#1a2226"/>
<path d="M56,62 L63,62 L63,79 L56,79Z" fill="#1c3844"/>
<ellipse cx="63.5" cy="82.5" rx="4" ry="4.5" fill="#a86a4a"/>
<path d="M38.5,47.6 L38.5,36 C40,31 46,29 52,29 L62,29 C68,29 72,32 73.4,38 L73.4,47.6Z" fill="#dcd8d0"/>
<ellipse cx="58.3" cy="29.5" rx="6.5" ry="5.6" fill="#b06a4a"/>
<ellipse cx="56" cy="30" rx="3" ry="3" fill="#c8886a" opacity="0.7"/>
<path d="M50,25 C47.5,16 51,9 58,8 C66,7 73,11 73.5,19 C74,25 72.5,31 68.5,33.5 C67,28 65,24.5 61,23.5 C57,22.5 53,23 50,25Z" fill="#6e5034"/>
<g fill="none" stroke="#b8945c" stroke-width="0.9"><path d="M53,12.5 C55,10.5 58,10.5 60,11.5"/><path d="M62,10.5 C65,10 68,11.5 69,14"/><path d="M51.5,18 C53,16.5 55,16.5 56.5,17.5"/><path d="M58,15 C60,14 63,14 64,15.5"/><path d="M66,18 C68,17.5 70,19 70.5,21"/><path d="M68,24 C70,24 71,26 71,28"/></g>
<path d="M25.8,41 C30,39.5 35,39.5 39.7,40 L40,44.3 C35,44.5 30,44.5 26,44Z" fill="#c89070"/>
<path d="M57,45 C62,44 68,41 73.4,39.7 L73.4,46 C68,48 62,48.5 57,48.3Z" fill="#c48c6c"/>
<path d="M24.5,45 C34,43.5 45,44 55,46.5 C66,45 77,46 86,51.5 L85,54.5 C75,52.5 65,53 55,55 C45,53 35,52.5 25,51.5 Z" fill="#ebe2c8"/>
<path d="M25,51.5 C35,52.5 45,53 55,55 C65,53 75,52.5 85,54.5 L84,56.5 C74,55.5 64,56 55,57.5 C45,56 35,55 26,54Z" fill="#7a6244"/>
<!-- flowers -->
<path d="M102,36 C107,30 117,31 120,38 L122,52 L122,78 C117,84 108,82 101,75 C95,69 92,62 93,56 C94,48 98,42 102,36Z" fill="#3a0a10" opacity="0.6"/><ellipse cx="114.2" cy="63.3" rx="2.9" ry="1.9" transform="rotate(133 114.2 63.3)" fill="#8a1024"/><ellipse cx="116.5" cy="75.2" rx="2.0" ry="1.1" transform="rotate(28 116.5 75.2)" fill="#8e1a30"/><ellipse cx="97.4" cy="54.8" rx="2.5" ry="1.6" transform="rotate(2 97.4 54.8)" fill="#a82242"/><ellipse cx="95.2" cy="51.4" rx="3.0" ry="1.4" transform="rotate(137 95.2 51.4)" fill="#9a1830"/><ellipse cx="112.6" cy="36.6" rx="1.8" ry="1.0" transform="rotate(157 112.6 36.6)" fill="#a82242"/><ellipse cx="121.8" cy="71.5" rx="1.9" ry="1.2" transform="rotate(56 121.8 71.5)" fill="#a82242"/><ellipse cx="112.0" cy="58.7" rx="1.9" ry="1.9" transform="rotate(124 112.0 58.7)" fill="#5a0a14"/><ellipse cx="101.3" cy="45.4" rx="1.9" ry="1.1" transform="rotate(12 101.3 45.4)" fill="#7a1226"/><ellipse cx="111.0" cy="74.0" rx="2.6" ry="1.7" transform="rotate(12 111.0 74.0)" fill="#8e1a30"/><ellipse cx="107.9" cy="74.0" rx="2.1" ry="1.5" transform="rotate(127 107.9 74.0)" fill="#8a1024"/><ellipse cx="119.7" cy="43.1" rx="3.1" ry="1.4" transform="rotate(73 119.7 43.1)" fill="#5a0a14"/><ellipse cx="108.7" cy="49.1" rx="1.6" ry="1.0" transform="rotate(33 108.7 49.1)" fill="#a82242"/><ellipse cx="104.4" cy="35.5" rx="2.9" ry="1.5" transform="rotate(92 104.4 35.5)" fill="#7a1226"/><ellipse cx="97.1" cy="71.7" rx="2.8" ry="1.8" transform="rotate(155 97.1 71.7)" fill="#8a1024"/><ellipse cx="122.3" cy="52.8" rx="1.9" ry="1.5" transform="rotate(65 122.3 52.8)" fill="#6e0c1c"/><ellipse cx="120.4" cy="47.7" rx="2.5" ry="1.3" transform="rotate(57 120.4 47.7)" fill="#6e0c1c"/><ellipse cx="112.2" cy="72.9" rx="2.8" ry="1.3" transform="rotate(87 112.2 72.9)" fill="#8a1024"/><ellipse cx="112.2" cy="33.5" rx="3.1" ry="1.0" transform="rotate(133 112.2 33.5)" fill="#8e1a30"/><ellipse cx="107.2" cy="74.4" rx="2.3" ry="1.1" transform="rotate(165 107.2 74.4)" fill="#8a1024"/><ellipse cx="103.7" cy="73.1" rx="1.9" ry="2.0" transform="rotate(102 103.7 73.1)" fill="#6e0c1c"/><ellipse cx="115.8" cy="63.7" rx="1.8" ry="1.4" transform="rotate(27 115.8 63.7)" fill="#5a0a14"/><ellipse cx="104.4" cy="45.2" rx="3.2" ry="1.9" transform="rotate(176 104.4 45.2)" fill="#b02a46"/><ellipse cx="114.0" cy="81.8" rx="2.1" ry="1.3" transform="rotate(85 114.0 81.8)" fill="#6e0c1c"/><ellipse cx="117.1" cy="35.2" rx="2.5" ry="1.2" transform="rotate(169 117.1 35.2)" fill="#8e1a30"/><ellipse cx="109.8" cy="38.9" rx="2.4" ry="1.5" transform="rotate(91 109.8 38.9)" fill="#9a1830"/><ellipse cx="116.5" cy="72.2" rx="2.7" ry="1.7" transform="rotate(137 116.5 72.2)" fill="#8e1a30"/><ellipse cx="111.7" cy="59.8" rx="2.9" ry="1.3" transform="rotate(177 111.7 59.8)" fill="#7a1226"/><ellipse cx="103.9" cy="81.6" rx="1.9" ry="1.9" transform="rotate(85 103.9 81.6)" fill="#7a1226"/><ellipse cx="98.3" cy="46.9" rx="2.1" ry="1.5" transform="rotate(121 98.3 46.9)" fill="#8e1a30"/><ellipse cx="110.9" cy="48.1" rx="2.8" ry="1.8" transform="rotate(63 110.9 48.1)" fill="#6e0c1c"/><ellipse cx="114.0" cy="76.8" rx="3.2" ry="2.0" transform="rotate(93 114.0 76.8)" fill="#6e0c1c"/><ellipse cx="107.0" cy="39.9" rx="3.0" ry="1.3" transform="rotate(14 107.0 39.9)" fill="#5a0a14"/><ellipse cx="116.2" cy="38.5" rx="2.5" ry="1.7" transform="rotate(76 116.2 38.5)" fill="#7a1226"/><ellipse cx="94.8" cy="68.6" rx="1.9" ry="1.4" transform="rotate(117 94.8 68.6)" fill="#a82242"/><ellipse cx="99.2" cy="70.7" rx="2.7" ry="2.0" transform="rotate(176 99.2 70.7)" fill="#6e0c1c"/><ellipse cx="101.9" cy="32.0" rx="2.1" ry="1.2" transform="rotate(35 101.9 32.0)" fill="#8a1024"/><ellipse cx="100.9" cy="51.9" rx="2.7" ry="1.1" transform="rotate(37 100.9 51.9)" fill="#8e1a30"/><ellipse cx="107.9" cy="29.0" rx="2.0" ry="1.4" transform="rotate(21 107.9 29.0)" fill="#8e1a30"/><ellipse cx="109.9" cy="82.0" rx="2.1" ry="1.3" transform="rotate(92 109.9 82.0)" fill="#7a1226"/><ellipse cx="117.7" cy="81.7" rx="2.3" ry="1.8" transform="rotate(116 117.7 81.7)" fill="#8e1a30"/><ellipse cx="94.3" cy="54.7" rx="2.2" ry="1.5" transform="rotate(36 94.3 54.7)" fill="#6e0c1c"/><ellipse cx="100.9" cy="62.5" rx="3.0" ry="1.0" transform="rotate(19 100.9 62.5)" fill="#6e0c1c"/><ellipse cx="118.8" cy="46.9" rx="2.5" ry="1.4" transform="rotate(176 118.8 46.9)" fill="#b02a46"/><ellipse cx="122.1" cy="45.0" rx="2.2" ry="2.0" transform="rotate(164 122.1 45.0)" fill="#7a1226"/><ellipse cx="102.7" cy="69.8" rx="2.0" ry="1.0" transform="rotate(170 102.7 69.8)" fill="#7a1226"/><ellipse cx="98.7" cy="56.0" rx="2.4" ry="1.1" transform="rotate(112 98.7 56.0)" fill="#b02a46"/><ellipse cx="99.9" cy="42.5" rx="1.8" ry="1.4" transform="rotate(86 99.9 42.5)" fill="#7a1226"/><ellipse cx="109.4" cy="42.4" rx="1.7" ry="1.5" transform="rotate(152 109.4 42.4)" fill="#7a1226"/><ellipse cx="109.7" cy="45.1" rx="2.4" ry="1.6" transform="rotate(109 109.7 45.1)" fill="#9a1830"/><ellipse cx="101.8" cy="29.9" rx="2.1" ry="1.7" transform="rotate(110 101.8 29.9)" fill="#8a1024"/><ellipse cx="101.3" cy="54.5" rx="2.8" ry="1.6" transform="rotate(7 101.3 54.5)" fill="#7a1226"/><ellipse cx="112.3" cy="59.4" rx="1.8" ry="1.7" transform="rotate(34 112.3 59.4)" fill="#5a0a14"/><ellipse cx="106.4" cy="71.8" rx="2.5" ry="1.7" transform="rotate(114 106.4 71.8)" fill="#b02a46"/><ellipse cx="118.4" cy="76.2" rx="2.4" ry="1.7" transform="rotate(130 118.4 76.2)" fill="#7a1226"/><ellipse cx="114.8" cy="54.6" rx="2.1" ry="1.0" transform="rotate(140 114.8 54.6)" fill="#7a1226"/><ellipse cx="105.1" cy="64.7" rx="2.1" ry="1.2" transform="rotate(125 105.1 64.7)" fill="#b02a46"/><ellipse cx="109.6" cy="82.5" rx="2.3" ry="1.5" transform="rotate(9 109.6 82.5)" fill="#a82242"/><ellipse cx="100.9" cy="43.7" rx="1.7" ry="1.9" transform="rotate(60 100.9 43.7)" fill="#5a0a14"/><ellipse cx="123.0" cy="82.8" rx="2.7" ry="1.0" transform="rotate(152 123.0 82.8)" fill="#a82242"/><ellipse cx="117.0" cy="62.8" rx="1.8" ry="1.9" transform="rotate(179 117.0 62.8)" fill="#b02a46"/><ellipse cx="112.4" cy="37.2" rx="2.3" ry="1.2" transform="rotate(112 112.4 37.2)" fill="#8a1024"/><ellipse cx="111.4" cy="59.6" rx="2.8" ry="1.3" transform="rotate(103 111.4 59.6)" fill="#9a1830"/><ellipse cx="119.5" cy="69.8" rx="1.8" ry="1.4" transform="rotate(57 119.5 69.8)" fill="#b02a46"/><ellipse cx="120.9" cy="55.9" rx="2.2" ry="1.1" transform="rotate(126 120.9 55.9)" fill="#6e0c1c"/><ellipse cx="112.1" cy="60.3" rx="2.1" ry="1.9" transform="rotate(99 112.1 60.3)" fill="#a82242"/><ellipse cx="111.1" cy="43.5" rx="2.0" ry="1.8" transform="rotate(93 111.1 43.5)" fill="#6e0c1c"/><ellipse cx="119.0" cy="73.4" rx="2.3" ry="1.4" transform="rotate(24 119.0 73.4)" fill="#8a1024"/><ellipse cx="96.5" cy="65.0" rx="2.7" ry="1.1" transform="rotate(22 96.5 65.0)" fill="#b02a46"/><ellipse cx="118.3" cy="42.1" rx="2.4" ry="1.3" transform="rotate(143 118.3 42.1)" fill="#8a1024"/><ellipse cx="102.1" cy="58.8" rx="3.0" ry="1.9" transform="rotate(77 102.1 58.8)" fill="#a82242"/><ellipse cx="96.4" cy="70.2" rx="3.1" ry="1.5" transform="rotate(38 96.4 70.2)" fill="#5a0a14"/><ellipse cx="97.0" cy="48.5" rx="2.1" ry="1.6" transform="rotate(63 97.0 48.5)" fill="#5a0a14"/><ellipse cx="113.6" cy="49.8" rx="2.2" ry="1.3" transform="rotate(114 113.6 49.8)" fill="#8e1a30"/><ellipse cx="109.1" cy="57.5" rx="2.5" ry="1.7" transform="rotate(71 109.1 57.5)" fill="#9a1830"/><ellipse cx="103.1" cy="31.0" rx="1.9" ry="1.5" transform="rotate(169 103.1 31.0)" fill="#8e1a30"/><ellipse cx="109.3" cy="29.0" rx="3.0" ry="1.6" transform="rotate(77 109.3 29.0)" fill="#b02a46"/><ellipse cx="95.5" cy="54.4" rx="2.6" ry="1.1" transform="rotate(156 95.5 54.4)" fill="#b02a46"/><ellipse cx="104.6" cy="37.4" rx="2.0" ry="1.2" transform="rotate(52 104.6 37.4)" fill="#a82242"/><ellipse cx="118.7" cy="30.8" rx="2.2" ry="1.8" transform="rotate(57 118.7 30.8)" fill="#8a1024"/><ellipse cx="113.5" cy="66.8" rx="2.4" ry="1.9" transform="rotate(21 113.5 66.8)" fill="#8e1a30"/><ellipse cx="111.9" cy="45.0" rx="2.8" ry="1.2" transform="rotate(36 111.9 45.0)" fill="#8a1024"/><ellipse cx="111.3" cy="60.6" rx="2.6" ry="1.9" transform="rotate(127 111.3 60.6)" fill="#7a1226"/><ellipse cx="107.0" cy="39.1" rx="1.7" ry="2.0" transform="rotate(84 107.0 39.1)" fill="#a82242"/><ellipse cx="103.6" cy="38.7" rx="1.7" ry="1.6" transform="rotate(131 103.6 38.7)" fill="#7a1226"/><ellipse cx="100.3" cy="29.3" rx="2.8" ry="1.4" transform="rotate(8 100.3 29.3)" fill="#8e1a30"/>
<rect x="114" y="84" width="7" height="38" fill="#181210"/>
<path d="M99.5,19 L104,19 L104.5,31.7 L100,32Z" fill="#c8863a"/>
<!-- books -->
<path d="M78,92 L111,93 L112,99 L77,99Z" fill="#b07a3c"/>
<path d="M79,92.5 L108,93 L108,95 L79,95Z" fill="#d8a848" opacity="0.7"/>
<path d="M78,99 L111,99 L111,101.5 L79,101.5Z" fill="#2a4a58"/>
<path d="M80,101.5 L112,101.5 L112,108 L81,108Z" fill="#1c1a18"/>
<path d="M84,108 L109,108 L110,115 L84,115Z" fill="#34342a"/>
<path d="M52,112 L74,108 L86,115 L63,121Z" fill="#9a7058"/>
<path d="M88,116 L96,115 L97,121 L89,121Z" fill="#c8b894"/>
</g>
</g>
<!-- logo -->
<circle cx="19.8" cy="16.5" r="7.9" fill="none" stroke="#f4eee8" stroke-width="1.5"/>
<path d="M15.2,14.9 C15.2,12.1 18.6,11.9 19.8,14.3 C21,11.9 24.4,12.1 24.4,14.9 C24.4,17.7 19.8,21.1 19.8,21.1 C19.8,21.1 15.2,17.7 15.2,14.9Z" fill="none" stroke="#f4eee8" stroke-width="1.3"/>
<circle cx="19.8" cy="18.7" r="1.3" fill="#f4eee8"/>
<rect x="11" y="27" width="17.4" height="1.2" fill="#d8c8bc" opacity="0.7"/>
<rect x="11" y="29.8" width="17.4" height="2.4" fill="#d8c8bc" opacity="0.75"/>
<!-- script text -->
<g fill="none" stroke="#ece4dc" stroke-width="1" opacity="0.95">
<path d="M16,101 C13,100 11.5,107 14.5,107.5 C16,107.5 17,105 18,104 C18.5,106.5 20,106.5 21,104 C21.5,106.5 23,106.5 24,104 C25,106 27,105 27.5,102 L28,106.5 C29,104 31,103 32,104 C33,106 35,105.5 36,104"/>
<path d="M38.5,104.5 C40,103 42,104 41.5,106 C41,108.5 40,109 40.5,106 C42,104 44,106 45,104.5 C46,106.5 48,106 49,104.5 C50,106.5 51,105.5 52,104.5"/>
<path d="M55,104.5 C56.5,102.5 58.5,106.5 60,104.5 L61.5,100 L61,106 C62.5,103.5 64,106.5 65.5,104.5 C67,102.5 68.5,106 70,104.5 C71,102 72,101 72.5,101"/>
<path d="M75,104.5 C76.5,103 78,106 79.5,104.5 C80.5,103 82,106 83,104.5"/>
<path d="M86,101 L85.5,106 M84,102.5 L88,102 C88.5,105 90,106 91.5,104.5 C92.5,106 94,105 95,104.5"/>
<path d="M97,104.5 C98.5,103 100,105 99,106.5 C98,107 98,105 99,104 L100,100 L100,106 C101.5,103.5 103,106.5 104,104.5 C105,106.5 106,105 107,104 C107.5,105.5 108.5,105.5 109,104"/>
</g>
<rect x="0.5" y="0.5" width="122" height="121" fill="none" stroke="#252a3c" stroke-width="1"/>
</svg>
<div class="a" style="left:779px;top:675px;width:137px;height:25px;border:1px solid #b9b9b9;border-radius:3px;background:linear-gradient(#fafafa,#ececec)"></div>
<div class="t" style="left:779px;top:680px;width:137px;line-height:16px;text-align:center">Mostrar más detalles</div>
<div class="a" style="left:5px;top:709px;width:920px;height:23px;background:#efefef"></div>
<div class="t" style="left:483px;top:714px;line-height:16px">10</div>
<svg style="left:500px;top:713px" width="17" height="17" viewBox="0 0 17 17"><path d="M0,0 H9 L12.5,3.5 V16 H0 Z" fill="#efebdd"/><path d="M9,0 L12.5,3.5 H9 Z" fill="#d9d3c0"/><g fill="#dcd6c4"><rect x="2.5" y="3" width="3" height="0.9"/><rect x="2.5" y="5.5" width="8" height="0.9"/><rect x="2.5" y="8" width="8" height="0.9"/><rect x="2.5" y="10.5" width="8" height="0.9"/><rect x="2.5" y="13" width="6" height="0.9"/></g><polygon points="8.3,8.4 16,7.6 16,9.6 8.3,10.4" fill="#168a8a"/><rect x="8.3" y="9" width="1.2" height="6" fill="#168a8a"/><rect x="14.8" y="8" width="1.2" height="5.6" fill="#168a8a"/><ellipse cx="7.7" cy="15.2" rx="1.7" ry="1.3" fill="#168a8a"/><ellipse cx="14.2" cy="13.8" rx="1.7" ry="1.3" fill="#168a8a"/></svg>
<div class="t" style="left:550px;top:714px;line-height:16px">0</div>
<svg style="left:560px;top:713px" width="16" height="16" viewBox="0 0 16 16"><circle cx="8" cy="8" r="7.4" fill="#cfe3ee" stroke="#8fb0e2" stroke-width="1"/><path d="M8,8 L15,8 A7,7 0 0 1 10,14.7 Z" fill="#a9c2ee"/><path d="M8,8 L1,8 A7,7 0 0 1 6,1.3 Z" fill="#bcd0f0"/><circle cx="8" cy="8" r="3.6" fill="#fff"/><circle cx="8" cy="8" r="2" fill="#e4eef6"/></svg>
<div class="t" style="left:610px;top:714px;line-height:16px">0</div>
<svg style="left:620px;top:712px" width="17" height="17" viewBox="0 0 17 17"><path d="M0,0 H9 L12.5,3.5 V16 H0 Z" fill="#ebebeb"/><path d="M9,0 L12.5,3.5 H9 Z" fill="#d6d6d6"/><g fill="#dcdcdc"><rect x="2.5" y="5.5" width="8" height="0.9"/><rect x="2.5" y="8" width="8" height="0.9"/><rect x="2.5" y="10.5" width="8" height="0.9"/></g><path d="M10.7,14.6 V9.6 L16,8.4 V13.4" fill="none" stroke="#3c3c3c" stroke-width="1.2"/><ellipse cx="9.4" cy="14.8" rx="1.5" ry="1.15" fill="#3c3c3c"/><ellipse cx="14.7" cy="13.6" rx="1.5" ry="1.15" fill="#3c3c3c"/></svg>
<div class="t" style="left:670px;top:714px;line-height:16px">0</div>
<svg style="left:680px;top:713px" width="16" height="16" viewBox="0 0 16 16"><path d="M6,0 H10 V6 H14 L8,12 L2,6 H6 Z" fill="#8c8c8c"/><rect x="0" y="13.5" width="16" height="2.5" rx="1" fill="#8c8c8c"/></svg>
<div class="t" style="left:709px;top:714px;line-height:16px">Escuchando en el puerto 8000</div>
<div class="a" style="left:913px;top:729px;width:1px;height:1px;background:#9a9a9a;box-shadow:1px 1px 0 #fff"></div>
<div class="a" style="left:916px;top:729px;width:1px;height:1px;background:#9a9a9a;box-shadow:1px 1px 0 #fff"></div>
<div class="a" style="left:919px;top:729px;width:1px;height:1px;background:#9a9a9a;box-shadow:1px 1px 0 #fff"></div>
<div class="a" style="left:922px;top:729px;width:1px;height:1px;background:#9a9a9a;box-shadow:1px 1px 0 #fff"></div>
<div class="a" style="left:916px;top:726px;width:1px;height:1px;background:#9a9a9a;box-shadow:1px 1px 0 #fff"></div>
<div class="a" style="left:919px;top:726px;width:1px;height:1px;background:#9a9a9a;box-shadow:1px 1px 0 #fff"></div>
<div class="a" style="left:922px;top:726px;width:1px;height:1px;background:#9a9a9a;box-shadow:1px 1px 0 #fff"></div>
<div class="a" style="left:919px;top:723px;width:1px;height:1px;background:#9a9a9a;box-shadow:1px 1px 0 #fff"></div>
<div class="a" style="left:922px;top:723px;width:1px;height:1px;background:#9a9a9a;box-shadow:1px 1px 0 #fff"></div>
<div class="a" style="left:922px;top:720px;width:1px;height:1px;background:#9a9a9a;box-shadow:1px 1px 0 #fff"></div>
</body></html>
